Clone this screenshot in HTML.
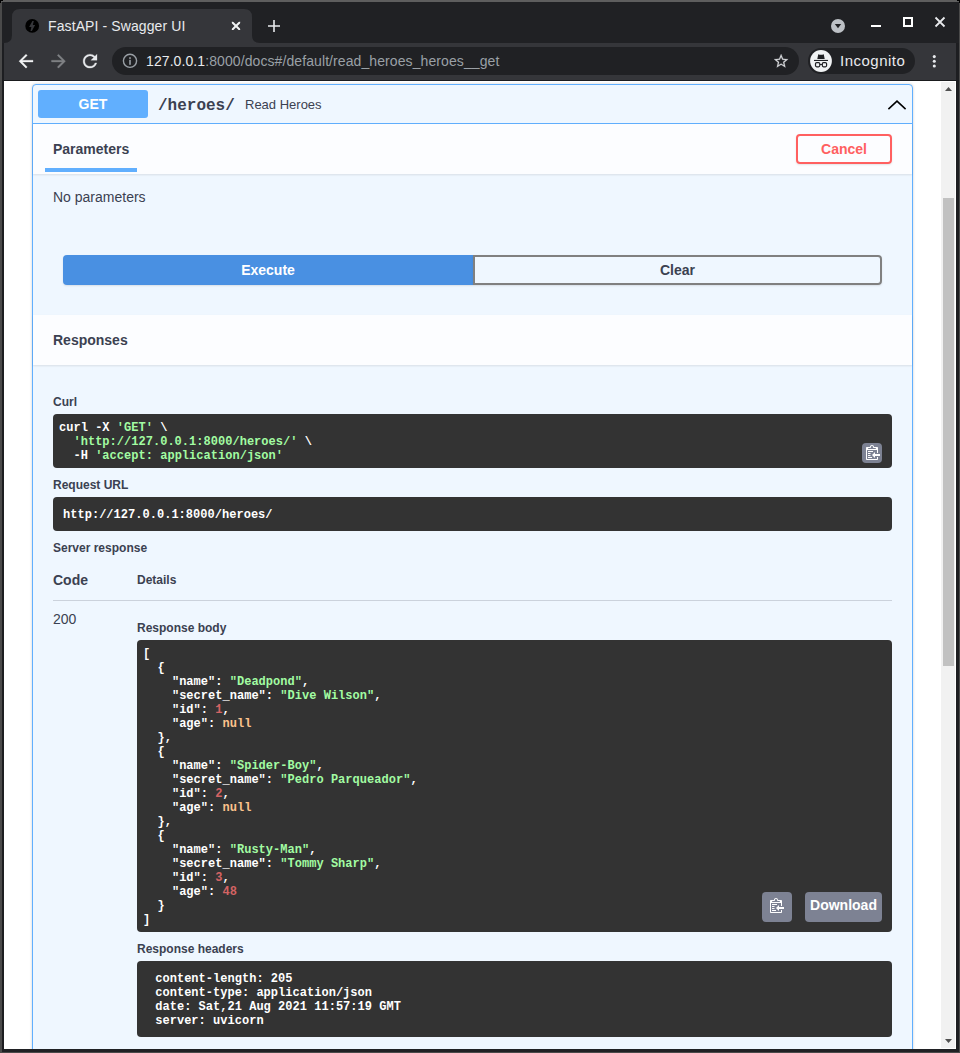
<!DOCTYPE html>
<html><head><meta charset="utf-8">
<style>
*{box-sizing:border-box;margin:0;padding:0}
html,body{width:960px;height:1053px;overflow:hidden;background:#202124;font-family:"Liberation Sans",sans-serif;position:relative}
.a{position:absolute}
.t{position:absolute;color:#3b4151;white-space:nowrap;font-family:"Liberation Sans",sans-serif}
.b14{font-size:14px;line-height:14px;font-weight:bold}
.r14{font-size:14px;line-height:14px}
.b12{font-size:12px;line-height:12px;font-weight:bold}
.r13{font-size:13px;line-height:13px}
.code{position:absolute;background:#333;border-radius:4px;color:#fff;font-family:"Liberation Mono",monospace;font-weight:bold;font-size:12px;line-height:14px;white-space:pre;letter-spacing:0.025px}
.s{color:#a2fca2}.n{color:#d36363}.nl{color:#fcc28c}
.copy{position:absolute;background:#7d8293;border-radius:4px}
</style></head><body>
<!-- browser frame -->
<div class="a" style="left:0;top:0;width:960px;height:1053px;background:#4a4a4a"></div>
<div class="a" style="left:2px;top:2px;width:957px;height:1050px;background:#202124"></div>
<div class="a" style="left:0;top:0;width:960px;height:2px;background:#5e5e5e"></div>
<div class="a" style="left:0;top:0;width:3px;height:1px;background:#000"></div><div class="a" style="left:0;top:0;width:1px;height:3px;background:#000"></div><div class="a" style="left:957px;top:0;width:3px;height:1px;background:#000"></div><div class="a" style="left:959px;top:0;width:1px;height:3px;background:#000"></div>
<svg class="a" style="left:0;top:0" width="300" height="44">
 <path d="M4 43 Q12 43 12 35 L12 17 Q12 9 20 9 L244 9 Q252 9 252 17 L252 35 Q252 43 260 43 Z" fill="#35363a"/>
 <circle cx="32.2" cy="25.9" r="6.9" fill="#000"/>
 <path d="M32.4 21.1 L33.8 21.1 L32.8 25.1 L35.1 25.1 L31.9 31.0 L30.5 31.0 L31.4 27.1 L29.1 27.1 Z" fill="#35363a"/>
 <clipPath id="cx"><rect x="231.8" y="21.8" width="8.4" height="8.3"/></clipPath><path clip-path="url(#cx)" d="M231 21 L241 31 M241 21 L231 31" stroke="#f1f3f4" stroke-width="2.0"/>
 <path d="M274 20 L274 32 M268 26 L280 26" stroke="#e8eaed" stroke-width="1.6"/>
</svg>
<div class="a" style="left:48px;top:18px;font-size:14px;line-height:16px;color:#e8eaed;letter-spacing:0.1px;white-space:nowrap">FastAPI - Swagger UI</div>
<svg class="a" style="left:820px;top:0" width="140" height="44">
 <circle cx="18" cy="26" r="7" fill="#bdc1c6"/>
 <path d="M14.8 23.9 L21.2 23.9 L18 28.3 Z" fill="#202124"/>
 <rect x="51" y="25" width="10" height="2" fill="#fff"/>
 <rect x="84" y="18" width="8" height="8" fill="none" stroke="#fff" stroke-width="2"/>
 <path d="M115.5 17.5 L124.5 26.5 M124.5 17.5 L115.5 26.5" stroke="#e8eaed" stroke-width="1.8"/>
</svg>
<div class="a" style="left:4px;top:43px;width:952px;height:37px;background:#35363a"></div>
<div class="a" style="left:2px;top:43px;width:2px;height:1007px;background:#1d1e21"></div>
<div class="a" style="left:956px;top:43px;width:3px;height:1007px;background:#1d1e21"></div>
<svg class="a" style="left:0;top:43px" width="112" height="37">
 <g transform="translate(15.5,7.65) scale(0.875)"><path d="M20 11H7.83l5.59-5.59L12 4l-8 8 8 8 1.41-1.41L7.83 13H20v-2z" fill="#f3f4f5" stroke="#f3f4f5" stroke-width="0.35"/></g>
 <g transform="translate(48,7.65) scale(0.875)"><path d="M4 11h12.17l-5.59-5.59L12 4l8 8-8 8-1.41-1.41L16.17 13H4v-2z" fill="#7f8184" stroke="#7f8184" stroke-width="0.35"/></g>
 <g transform="translate(79.6,7.7) scale(0.87)"><path d="M17.65 6.35C16.2 4.9 14.21 4 12 4c-4.42 0-7.99 3.58-7.99 8s3.57 8 7.99 8c3.73 0 6.84-2.55 7.73-6h-2.08c-.82 2.33-3.04 4-5.65 4-3.31 0-6-2.690-6-6s2.69-6 6-6c1.66 0 3.14.69 4.22 1.78L13 11h7V4l-2.35 2.35z" fill="#e8eaed" stroke="#e8eaed" stroke-width="0.3"/></g>
</svg>
<div class="a" style="left:112px;top:47px;width:687px;height:28px;background:#202124;border-radius:14px"></div>
<svg class="a" style="left:112px;top:47px" width="40" height="28">
 <circle cx="18" cy="13.8" r="6.6" fill="none" stroke="#9aa0a6" stroke-width="1.4"/>
 <rect x="17.2" y="10.2" width="1.6" height="1.7" fill="#9aa0a6"/>
 <rect x="17.2" y="12.8" width="1.6" height="5" fill="#9aa0a6"/>
</svg>
<div class="a" style="left:146px;top:53px;font-size:14px;line-height:16px;color:#9aa0a6;letter-spacing:0.09px;white-space:nowrap"><span style="color:#e8eaed">127.0.0.1</span>:8000/docs#/default/read_heroes_heroes__get</div>
<svg class="a" style="left:766px;top:48px" width="30" height="26">
 <g transform="translate(6.58,4.58) scale(0.71)"><path d="M22 9.24l-7.19-.62L12 2 9.19 8.63 2 9.24l5.46 4.73L5.82 21 12 17.27 18.18 21l-1.63-7.03L22 9.24zM12 15.4l-3.76 2.27 1-4.28-3.32-2.88 4.38-.38L12 6.1l1.71 4.04 4.38.38-3.320 2.88 1 4.28L12 15.4z" fill="#d5d7da" stroke="#d5d7da" stroke-width="0.25"/></g>
</svg>
<div class="a" style="left:808px;top:48px;width:107px;height:26px;background:#202124;border-radius:13px"></div>
<svg class="a" style="left:806px;top:46px" width="30" height="30">
 <circle cx="15" cy="15" r="10.9" fill="#f1f3f4"/>
 <path d="M11.3 12.9 L12.2 8.6 Q12.4 8 13 8.4 L13.6 8.8 L16.4 8.8 L17 8.4 Q17.6 8 17.8 8.6 L18.7 12.9 Z" fill="#202124"/>
 <rect x="8" y="13.9" width="14" height="1.1" fill="#202124"/>
 <rect x="9.5" y="16.6" width="4.3" height="4.2" rx="1.2" fill="none" stroke="#202124" stroke-width="1.2"/>
 <rect x="16.3" y="16.6" width="4.3" height="4.2" rx="1.2" fill="none" stroke="#202124" stroke-width="1.2"/>
 <rect x="13.8" y="18" width="2.5" height="1" fill="#202124"/>
</svg>
<div class="a" style="left:840px;top:53px;font-size:15px;line-height:16px;color:#e8eaed;letter-spacing:0.5px;white-space:nowrap">Incognito</div>
<svg class="a" style="left:928px;top:50px" width="14" height="22">
 <circle cx="6.3" cy="6.6" r="1.55" fill="#e8eaed"/><circle cx="6.3" cy="11.3" r="1.55" fill="#e8eaed"/><circle cx="6.3" cy="16" r="1.55" fill="#e8eaed"/>
</svg>
<div class="a" style="left:2px;top:80px;width:956px;height:1px;background:#1a1b1e"></div>

<!-- content -->
<div class="a" style="left:4px;top:81px;width:952px;height:968px;background:#fff;overflow:hidden">
 <div class="a" style="left:-4px;top:-81px;width:960px;height:1053px">
  <!-- card -->
  <div class="a" style="left:32px;top:84px;width:881px;height:1100px;border:1px solid #61affe;border-radius:4px;background:#eff7ff;box-shadow:0 0 3px rgba(0,0,0,.19)"></div>
  <div class="a" style="left:33px;top:123px;width:879px;height:1px;background:#61affe"></div>
  <div class="a" style="left:38px;top:90px;width:110px;height:28px;background:#61affe;border-radius:3px"></div>
  <div class="t b14" style="left:38px;top:97px;width:110px;text-align:center;color:#fff">GET</div>
  <div class="t" style="left:158px;top:98px;font-family:'Liberation Mono',monospace;font-weight:bold;font-size:16px;line-height:16px">/heroes/</div>
  <div class="t r13" style="left:245px;top:98px">Read Heroes</div>
  <svg class="a" style="left:880px;top:94px" width="34" height="20"><polyline points="8.4,15.1 17,7.1 25.6,15.1" fill="none" stroke="#000" stroke-width="1.55"/></svg>

  <!-- parameters header -->
  <div class="a" style="left:33px;top:124px;width:879px;height:50px;background:#fcfdff;box-shadow:0 1px 2px rgba(0,0,0,.1)"></div>
  <div class="t b14" style="left:53px;top:142px">Parameters</div>
  <div class="a" style="left:45px;top:168px;width:92px;height:4px;background:#61affe"></div>
  <div class="a" style="left:796px;top:134px;width:96px;height:30px;border:2px solid #ff6060;border-radius:4px;box-shadow:0 1px 2px rgba(0,0,0,.1)"></div>
  <div class="t b14" style="left:796px;top:142px;width:96px;text-align:center;color:#ff6060">Cancel</div>
  <div class="t r14" style="left:53px;top:190px">No parameters</div>

  <!-- execute / clear -->
  <div class="a" style="left:63px;top:255px;width:410px;height:30px;background:#4990e2;border-radius:4px 0 0 4px;box-shadow:0 1px 2px rgba(0,0,0,.1)"></div>
  <div class="t b14" style="left:63px;top:263px;width:410px;text-align:center;color:#fff">Execute</div>
  <div class="a" style="left:473px;top:255px;width:409px;height:30px;border:2px solid #808080;border-radius:0 4px 4px 0;box-shadow:0 1px 2px rgba(0,0,0,.1)"></div>
  <div class="t b14" style="left:473px;top:263px;width:409px;text-align:center">Clear</div>

  <!-- responses header -->
  <div class="a" style="left:33px;top:315px;width:879px;height:50px;background:#fcfdff;box-shadow:0 1px 2px rgba(0,0,0,.1)"></div>
  <div class="t b14" style="left:53px;top:333px">Responses</div>

  <div class="t b12" style="left:53px;top:396px">Curl</div>
  <div class="code" style="left:53px;top:414px;width:839px;height:54px;padding:7px 0 0 6px">curl -X <span class="s">'GET'</span> \
  <span class="s">'http://127.0.0.1:8000/heroes/'</span> \
  -H <span class="s">'accept: application/json'</span></div>
  <div class="copy" style="left:862px;top:443px;width:20px;height:20px"></div>
  <svg class="a" style="left:866px;top:444px" width="15" height="17"><path fill="#fff" fill-rule="evenodd" d="M2 13h4v1H2v-1zm5-6H2v1h5V7zm2 3V8l-3 3 3 3v-2h5v-2H9zM4.5 9H2v1h2.5V9zM2 12h2.5v-1H2v1zm9 1h1v2c-.02.28-.11.52-.3.7-.19.18-.42.28-.7.3H1c-.55 0-1-.45-1-1V4c0-.55.45-1 1-1h3c0-1.11.89-2 2-2 1.11 0 2 .89 2 2h3c.55 0 1 .45 1 1v5h-1V6H1v9h10v-2zM2 5h8c0-.55-.45-1-1-1H8c-.55 0-1-.45-1-1s-.45-1-1-1-1 .45-1 1-.45 1-1 1H3c-.55 0-1 .45-1 1z"/></svg>

  <div class="t b12" style="left:53px;top:479px">Request URL</div>
  <div class="code" style="left:53px;top:497px;width:839px;height:34px;padding:11px 0 0 10px">http://127.0.0.1:8000/heroes/</div>

  <div class="t b12" style="left:53px;top:542px">Server response</div>
  <div class="t b14" style="left:53px;top:573px">Code</div>
  <div class="t b12" style="left:137px;top:574px">Details</div>
  <div class="a" style="left:53px;top:600px;width:839px;height:1px;background:rgba(59,65,81,.2)"></div>
  <div class="t r14" style="left:53px;top:612px">200</div>
  <div class="t b12" style="left:137px;top:622px">Response body</div>

  <div class="code" style="left:137px;top:640px;width:755px;height:292px;padding:7px 0 0 6px">[
  {
    "name": <span class="s">"Deadpond"</span>,
    "secret_name": <span class="s">"Dive Wilson"</span>,
    "id": <span class="n">1</span>,
    "age": <span class="nl">null</span>
  },
  {
    "name": <span class="s">"Spider-Boy"</span>,
    "secret_name": <span class="s">"Pedro Parqueador"</span>,
    "id": <span class="n">2</span>,
    "age": <span class="nl">null</span>
  },
  {
    "name": <span class="s">"Rusty-Man"</span>,
    "secret_name": <span class="s">"Tommy Sharp"</span>,
    "id": <span class="n">3</span>,
    "age": <span class="n">48</span>
  }
]</div>
  <div class="copy" style="left:762px;top:892px;width:30px;height:30px"></div>
  <svg class="a" style="left:770px;top:897px" width="15" height="17"><path fill="#fff" fill-rule="evenodd" d="M2 13h4v1H2v-1zm5-6H2v1h5V7zm2 3V8l-3 3 3 3v-2h5v-2H9zM4.5 9H2v1h2.5V9zM2 12h2.5v-1H2v1zm9 1h1v2c-.02.28-.11.52-.3.7-.19.18-.42.28-.7.3H1c-.55 0-1-.45-1-1V4c0-.55.45-1 1-1h3c0-1.11.89-2 2-2 1.11 0 2 .89 2 2h3c.55 0 1 .45 1 1v5h-1V6H1v9h10v-2zM2 5h8c0-.55-.45-1-1-1H8c-.55 0-1-.45-1-1s-.45-1-1-1-1 .45-1 1-.45 1-1 1H3c-.55 0-1 .45-1 1z"/></svg>
  <div class="copy" style="left:805px;top:892px;width:77px;height:30px"></div>
  <div class="t b14" style="left:805px;top:898px;width:77px;text-align:center;color:#fff">Download</div>

  <div class="t b12" style="left:137px;top:943px">Response headers</div>
  <div class="code" style="left:137px;top:961px;width:755px;height:76px;padding:11px 0 0 11px"> content-length: 205 
 content-type: application/json 
 date: Sat,21 Aug 2021 11:57:19 GMT 
 server: uvicorn </div>

  <!-- scrollbar -->
  <div class="a" style="left:941px;top:82px;width:14px;height:966px;background:#f1f1f1"></div>
  <div class="a" style="left:943px;top:198px;width:11px;height:468px;background:#c1c1c1"></div>
  <svg class="a" style="left:941px;top:82px" width="14" height="12"><path d="M4 9 L11 9 L7.5 5 Z" fill="#505050"/></svg>
  <svg class="a" style="left:941px;top:1036px" width="14" height="12"><path d="M4 3 L11 3 L7.5 7 Z" fill="#505050"/></svg>
 </div>
</div>
</body></html>
